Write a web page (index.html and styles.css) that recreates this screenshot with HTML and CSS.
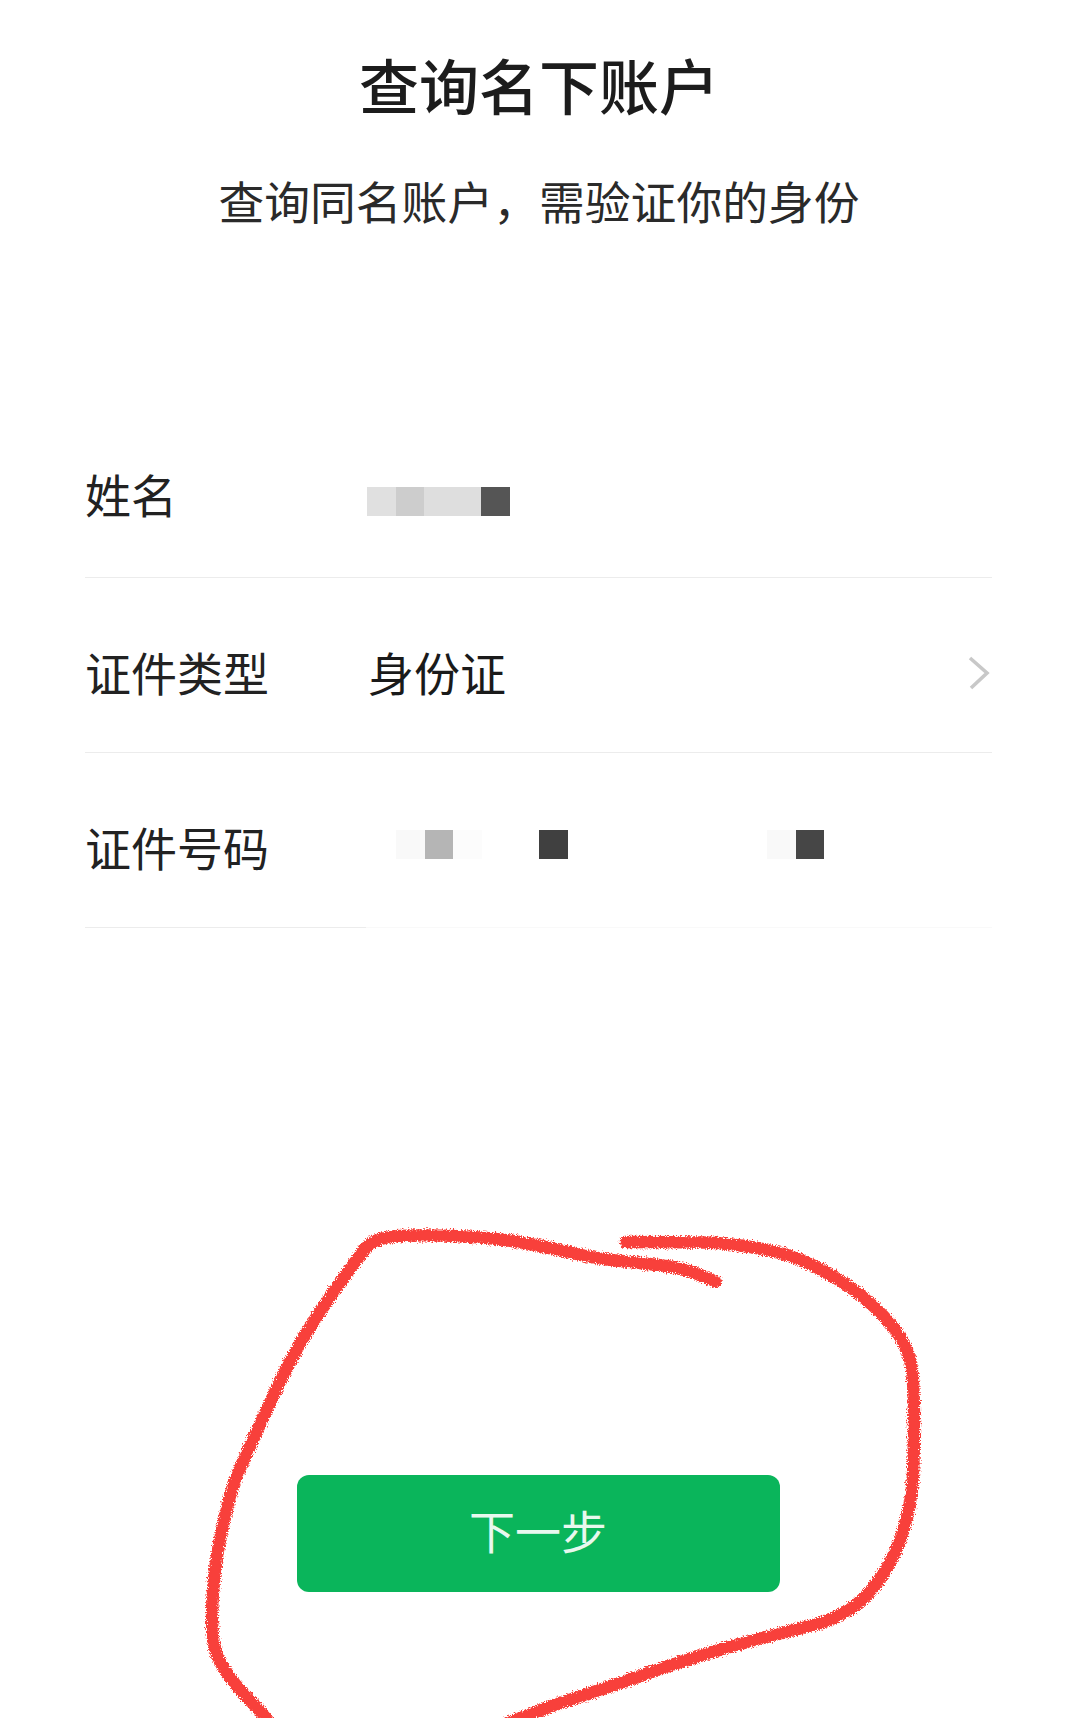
FILE: index.html
```html
<!DOCTYPE html>
<html lang="zh-CN">

<head>
    <meta charset="utf-8">
    <title>查询名下账户</title>
    <link rel="stylesheet" href="styles.css">
</head>

<body>

    <div class="page">
        <h1 class="title">查询名下账户</h1>
        <p class="subtitle">查询同名账户，需验证你的身份</p>

        <div class="form">
            <div class="row row-name">
                <div class="label">姓名</div>
                <div class="mosaic mosaic-name">
                    <span class="cell tone-e0"></span>
                    <span class="cell tone-cd"></span>
                    <span class="cell cell-wide tone-de"></span>
                    <span class="cell tone-55"></span>
                </div>
            </div>
            <div class="row">
                <div class="label">证件类型</div>
                <div class="value">身份证</div>
                <svg class="chevron" viewBox="0 0 22 34" width="22" height="34">
                    <polyline points="2,2 19,17 3,32" fill="none" stroke="#c8c8c8" stroke-width="3.6" />
                </svg>
            </div>
            <div class="row row-last">
                <div class="label">证件号码</div>
                <div class="mosaic mosaic-id">
                    <span class="cell tone-f9"></span>
                    <span class="cell tone-b5"></span>
                    <span class="cell tone-fc"></span>
                    <span class="cell cell-gap-a tone-40"></span>
                    <span class="cell cell-gap-b tone-f9"></span>
                    <span class="cell tone-46"></span>
                </div>
            </div>
        </div>

        <button class="next" type="button">下一步</button>

        <!-- hand drawn circle on top of the screenshot -->
        <svg class="scribble" viewBox="0 0 1078 1718" width="1078" height="1718">
            <defs>
                <filter id="rough" x="-5%" y="-5%" width="110%" height="110%">
                    <feTurbulence type="fractalNoise" baseFrequency="0.8" numOctaves="2" seed="4" />
                    <feDisplacementMap in="SourceGraphic" scale="7" xChannelSelector="R" yChannelSelector="G" />
                </filter>
            </defs>
            <g fill="none" stroke="#f8413a" stroke-width="12.5" stroke-linecap="round" stroke-linejoin="round" filter="url(#rough)">
                <path d="M715.6 1281.7 L700 1275 Q684 1268 662 1265.5 Q640.5 1263 616 1260.5 Q592 1258 570 1252.5 Q548 1247 521.5 1242.5 Q495 1238 466 1236.5 Q437 1235 412.7 1235.5 Q388.4 1236 378.7 1239.5 Q369 1243 361.7 1253 Q354.5 1263 342 1280 Q330 1297 315.5 1318.5 Q301 1340 289 1363.5 Q277 1387 265 1413.5 Q253 1440 243 1461.5 Q233 1483 227 1508 Q221 1533 217.5 1553 Q214 1573 212.7 1595 Q211.5 1617 212.7 1635 Q214 1653 223.5 1668 Q233 1683 250 1700.5 Q267 1718 275 1730" />
                <path d="M490 1730 L553 1705.5 Q592 1693 628.5 1680 Q665 1667 696.5 1657 Q728 1647 757 1639.5 Q786 1632 810 1626 Q834 1620 851 1608.5 Q868 1597 882.5 1575 Q897 1553 904.5 1526.5 Q912 1500 913 1475 Q914 1450 914 1425 Q914 1400 913 1380 Q912 1360 904.5 1345 Q897 1330 882.5 1315 Q868 1300 849 1286.5 Q829.5 1273 808 1263 Q786 1253 757 1248 Q728 1243 703.5 1242.5 Q679 1242 626 1242" />
            </g>
        </svg>
    </div>

</body>

</html>
```

FILE: styles.css
```css
body {
    margin: 0;
    background: #fff;
    font-family: "Noto Sans CJK SC", "Noto Sans", sans-serif;
    color: #222;
}

.page {
    position: relative;
    height: 1718px;
    overflow: hidden;
    display: flex;
    flex-direction: column;
    align-items: center;
}

.title {
    margin: 42px 0 0;
    font-size: 60px;
    line-height: 84px;
    font-weight: 500;
    color: #1c1c1c;
}

.subtitle {
    margin: 41px 0 0;
    font-size: 45.8px;
    line-height: 66px;
    color: #2a2a2a;
}

.form {
    align-self: stretch;
    margin: 170px 86px 0 85px;
}

.row {
    display: flex;
    align-items: center;
    box-sizing: border-box;
    height: 175px;
    padding-top: 12px;
    border-bottom: 1px solid #ececec;
}

.row-name {
    padding-top: 6px;
}

.row-last {
    padding-top: 10px;
    border-bottom: 0;
    background: linear-gradient(to right, #ececec 31%, #f9f9f9 31%) left bottom / 100% 1px no-repeat;
}

.label {
    width: 285px;
    box-sizing: border-box;
    font-size: 46px;
    line-height: 64px;
}

.value {
    margin-left: -2px;
    font-size: 46px;
    line-height: 64px;
    color: #1a1a1a;
}

.chevron {
    margin-left: auto;
    margin-right: 2px;
    margin-top: 4px;
}

.mosaic {
    display: flex;
}

.mosaic-name {
    margin-left: -3px;
    margin-top: 16px;
}

.mosaic-id {
    margin-left: 26px;
    margin-bottom: 2px;
}

.cell {
    width: 28.5px;
    height: 29px;
}

.cell-wide {
    width: 57px;
}

.cell-gap-a {
    margin-left: 57.5px;
}

.cell-gap-b {
    margin-left: 199.5px;
}

.tone-e0 { background: #e0e0e0; }
.tone-cd { background: #cdcdcd; }
.tone-de { background: #dedede; }
.tone-55 { background: #555; }
.tone-f9 { background: #f9f9f9; }
.tone-b5 { background: #b5b5b5; }
.tone-fc { background: #fcfcfc; }
.tone-40 { background: #404040; }
.tone-46 { background: #464646; }

.next {
    width: 483px;
    height: 117px;
    margin-top: 547px;
    margin-right: 2px;
    padding: 0 0 10px;
    border: none;
    border-radius: 12px;
    background: #0ab55b;
    color: #e8f8ee;
    font-family: inherit;
    font-size: 46px;
}

.scribble {
    position: absolute;
    left: 0;
    top: 0;
    pointer-events: none;
}
```
